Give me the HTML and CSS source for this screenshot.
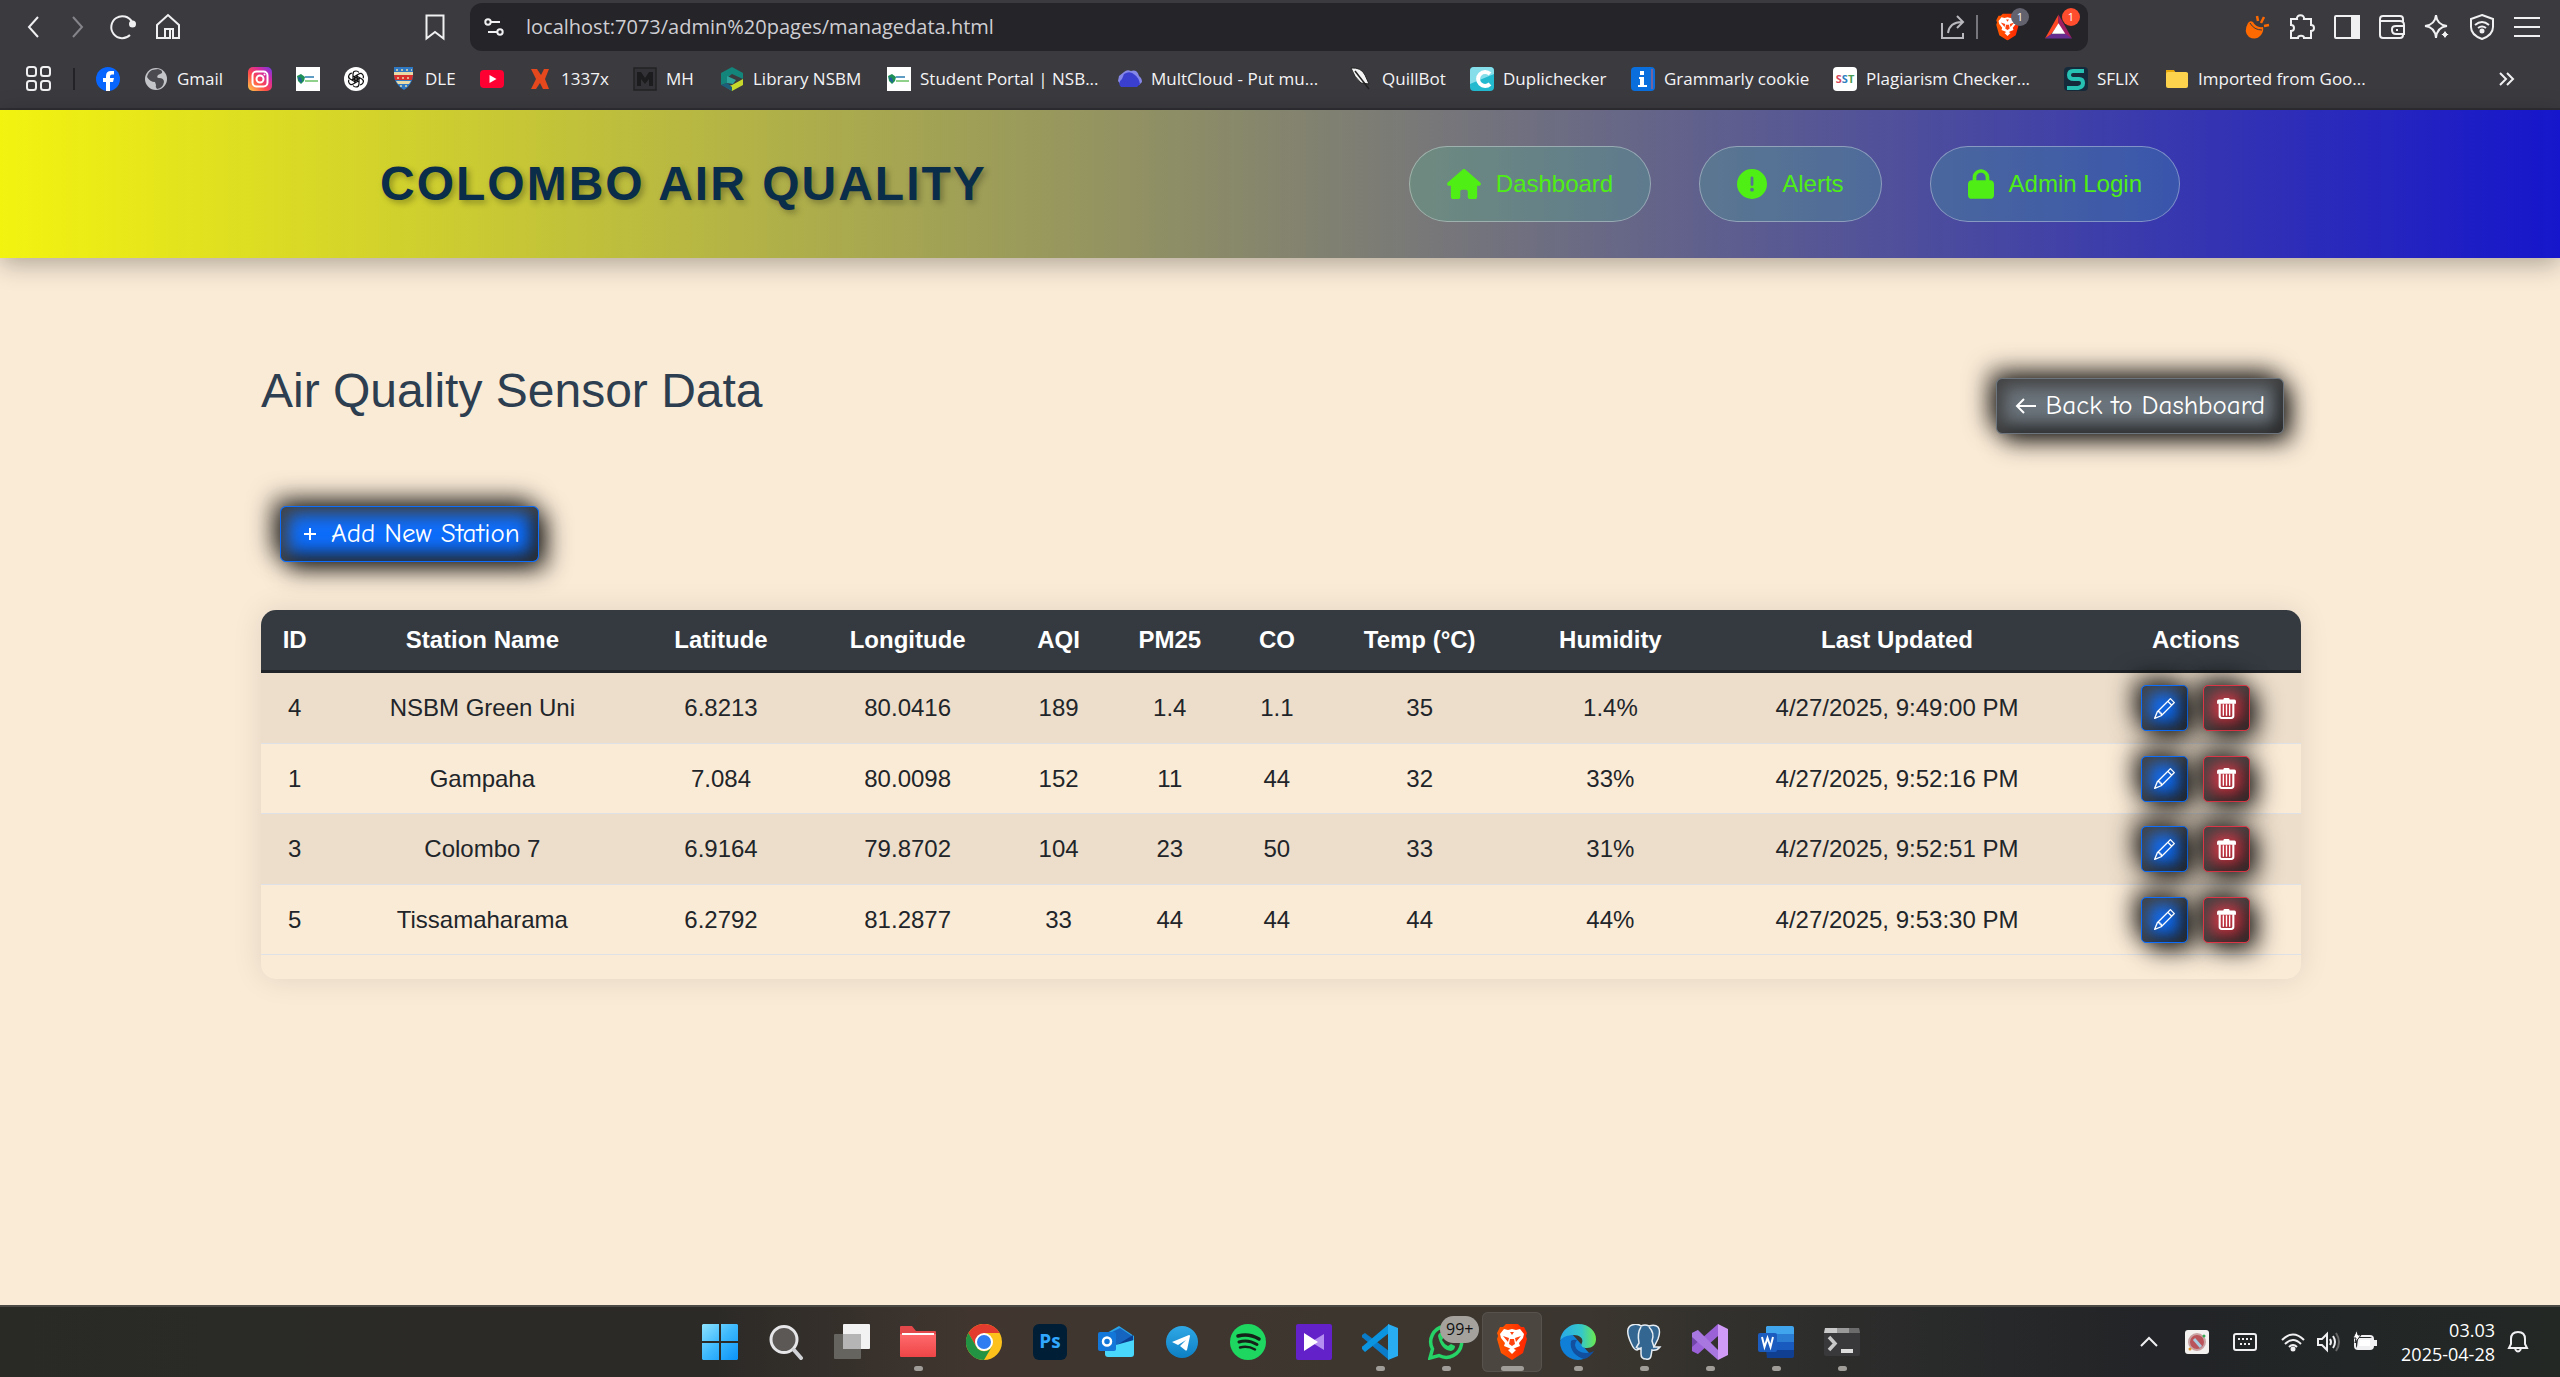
FILE: index.html
```html
<!DOCTYPE html>
<html lang="en">
<head>
<meta charset="utf-8">
<title>Colombo Air Quality - Manage Data</title>
<link rel="stylesheet" href="styles.css">
</head>
<body>
<svg class="defs" aria-hidden="true">
  <defs>
    <linearGradient id="gWin" x1="0" y1="0" x2="1" y2="1"><stop offset="0" stop-color="#8ee3ff"/><stop offset=".5" stop-color="#3cb8fd"/><stop offset="1" stop-color="#0a92f8"/></linearGradient>
    <linearGradient id="gInsta" x1="0" y1="1" x2="1" y2="0"><stop offset="0" stop-color="#ffd24a"/><stop offset=".4" stop-color="#ff4b4b"/><stop offset=".7" stop-color="#d52aa0"/><stop offset="1" stop-color="#6a3be8"/></linearGradient>
    <linearGradient id="gBrave" x1="0" x2="1"><stop offset="0" stop-color="#ff5a00"/><stop offset="1" stop-color="#ff2400"/></linearGradient>
    <linearGradient id="gEdge" x1="0" x2="1"><stop offset="0" stop-color="#29a9e8"/><stop offset=".6" stop-color="#35c8c8"/><stop offset="1" stop-color="#6bea4e"/></linearGradient>
    <linearGradient id="gTele" x1="0" y1="0" x2="0" y2="1"><stop offset="0" stop-color="#2fa8e6"/><stop offset="1" stop-color="#0d7fc4"/></linearGradient>
    <linearGradient id="gFold" x1="0" y1="0" x2="0" y2="1"><stop offset="0" stop-color="#ff6a6c"/><stop offset="1" stop-color="#ee4547"/></linearGradient>
    <symbol id="brave" viewBox="0 0 36 36"><path fill="url(#gBrave)" d="M12 0h12l3 3h3l3 6-1 3 1 3-4 14-11 7-11-7L3 15l1-3-1-3 3-6h3z"/><path fill="#fff" d="M18 5l4 1 4-1 4 5-1 4-4 5 1 3-5 2-3 2-3-2-5-2 1-3-4-5-1-4 4-5 4 1z"/><path fill="#ff4310" d="M9 12l6 2-1 4zM27 12l-6 2 1 4zM16 15h4l1 5-3 2-3-2zM16 8h4l-2 3z"/><path fill="#fff" d="M14 26l4-2 4 2-4 4z"/></symbol>
    <symbol id="nsbm" viewBox="0 0 24 24"><path fill="#fff" d="M0 0h24v24H0z"/><path fill="#1d8f57" d="M1 9l4-2 4 3-1 4-3 3-3-3z"/><path fill="#2457a8" d="M2 10l3 1 1 5-3-3z"/><path fill="#8fd08a" d="M9 13h13v2H9z"/><path fill="#5f9cc4" d="M9 9h9v2H9z"/></symbol>
    <symbol id="pencil" viewBox="0 0 16 16"><path fill="currentColor" d="M12.146.146a.5.5 0 0 1 .708 0l3 3a.5.5 0 0 1 0 .708l-10 10a.5.5 0 0 1-.168.11l-5 2a.5.5 0 0 1-.65-.65l2-5a.5.5 0 0 1 .11-.168zM11.207 2.5 13.5 4.793 14.793 3.5 12.5 1.207zm1.586 3L10.5 3.207 4 9.707V10h.5a.5.5 0 0 1 .5.5v.5h.5a.5.5 0 0 1 .5.5v.5h.293zm-9.761 5.175-.106.106-1.528 3.821 3.821-1.528.106-.106A.5.5 0 0 1 5 12.5V12h-.5a.5.5 0 0 1-.5-.5V11h-.5a.5.5 0 0 1-.468-.325z"/></symbol>
    <symbol id="trash" viewBox="0 0 20 20"><path fill="currentColor" d="M1 3q0-1.500 1.500-1.500H7Q7 0 8 0h4q1 0 1 1.500h4.500Q19 1.500 19 3v2.500H1z"/><path fill="none" stroke="currentColor" stroke-width="2" d="M3.500 5v12q0 2 2 2h9q2 0 2-2V5"/><path stroke="currentColor" stroke-width="1.300" d="M7 6v11M10 6v11M13 6v11"/></symbol>
  </defs>
</svg>

<div class="browser">
  <div class="toolbar">
    <nav class="controls" aria-label="Browser">
      <button class="tool" aria-label="Back"><svg viewBox="0 0 26 26"><path d="M18 3 9 13l9 10"/></svg></button>
      <button class="tool dim" aria-label="Forward"><svg viewBox="0 0 26 26"><path d="M8 3l9 10-9 10"/></svg></button>
      <button class="tool" aria-label="Reload"><svg viewBox="0 0 26 26"><path d="M20 21a11 11 0 1 1 2-13"/><circle cx="22.500" cy="10" r="2.500" fill="#f0f0f2"/></svg></button>
      <button class="tool" aria-label="Home"><svg viewBox="0 0 26 26"><path d="M2 11 13 1l11 10v13h-6v-9h-3v9H2zM10 24v-9h5"/></svg></button>
    </nav>
    <button class="tool mark" aria-label="Bookmark this page"><svg viewBox="0 0 26 26"><path d="M4.500 1.500h17v23L13 18l-8.500 6.500z"/></svg></button>
    <div class="omnibox">
      <button class="tool small" aria-label="Site settings"><svg viewBox="0 0 20 20"><circle cx="4" cy="5" r="2.700"/><path d="M7 5h9M4 15h9"/><circle cx="16" cy="15" r="2.700"/></svg></button>
      <input class="url" type="text" aria-label="Address" value="localhost:7073/admin%20pages/managedata.html">
      <button class="tool dimmer" aria-label="Share"><svg viewBox="0 0 26 26"><path d="M2 9v15h21v-5M8 19c1-7 5-11 14-11M17 2l6 6-6 6"/></svg></button>
      <span class="sep"></span>
      <button class="badged" aria-label="Brave Shields"><svg viewBox="0 0 36 36"><use href="#brave"/></svg><span class="badge gray">1</span></button>
      <button class="badged" aria-label="Brave Rewards"><svg viewBox="0 0 28 26"><path fill="#ff4724" d="M14 0v10L6 21l-6 4z"/><path fill="#9e1f63" d="M14 0l14 25-7-4-7-11z"/><path fill="#662d91" d="M0 25l7-5h14l7 5z"/><path fill="#fff" d="M14 9l7 11H7z"/></svg><span class="badge red">1</span></button>
    </div>
    <div class="extensions">
      <button class="tool" aria-label="Extension"><svg viewBox="0 0 26 26"><path fill="#ff6a00" stroke="none" d="M4 9q-5 9 1 14 7 4 12-2 3-4 2-8-7 1-10-5-3-2-5 1z"/><path stroke="#ff6a00" stroke-width="2.500" d="M13 2l1 5M20 3l-3 6M25 11l-5 1"/><path stroke="#3b3a3f" stroke-width="1" d="M6 9q4 7 12 7"/></svg></button>
      <button class="tool" aria-label="Extensions"><svg viewBox="0 0 26 26"><path d="M2 5h6c-1-5 8-5 7 0h7v6c4 0 4 6 0 6v7h-7c0-3-6-3-6 0H2v-7c4 0 4-6 0-6z"/></svg></button>
      <button class="tool" aria-label="Sidebar"><svg viewBox="0 0 26 26"><rect x="1" y="2" width="24" height="22" rx="1"/><path fill="#f0f0f2" d="M18 2h7v22h-7z"/></svg></button>
      <button class="tool" aria-label="Wallet"><svg viewBox="0 0 26 26"><path d="M24 8V5q0-3-3-3H4Q1 2 1 5v16q0 3 3 3h17q3 0 3-3v-2M1 7h20q4 0 4 4v9h-8q-4 0-4-4v-1q0-3 4-3h8M17 16h2"/></svg></button>
      <button class="tool" aria-label="Leo"><svg viewBox="0 0 26 26"><path d="M12 1q1 10 11 11-10 1-11 12-1-11-11-12Q11 11 12 1z"/><path fill="#f0f0f2" stroke="#3b3a3f" stroke-width="1" d="M21 15q1 5 5 5.500-4 .5-5 5.500-1-5-5-5.500 4-.5 5-5.500z"/></svg></button>
      <button class="tool" aria-label="VPN"><svg viewBox="0 0 26 26"><path d="M13 1l11 4v8q0 8-11 12Q2 21 2 13V5zM6 11q7-6 14 0M9 14q4-3 8 0"/><circle cx="13" cy="17" r="1.500" fill="#f0f0f2"/></svg></button>
      <button class="tool" aria-label="Menu"><svg viewBox="0 0 26 26"><path d="M0 4h26M0 13h26M0 22h26"/></svg></button>
    </div>
  </div>
  <nav class="bookmarks" aria-label="Bookmarks">
    <button class="tool" aria-label="Apps"><svg viewBox="0 0 26 26"><rect x="1" y="1" width="9" height="9" rx="2.500"/><rect x="15" y="1" width="9" height="9" rx="2.500"/><rect x="1" y="15" width="9" height="9" rx="2.500"/><rect x="15" y="15" width="9" height="9" rx="2.500"/></svg></button>
    <span class="rule"></span>
    <a href="#" aria-label="Facebook"><svg viewBox="0 0 24 24"><circle cx="12" cy="12" r="12" fill="#0866ff"/><path fill="#fff" d="M10 24v-9H7v-4h3V9q0-5 5-5h3v3.500h-2q-2 0-2 2V11h4l-1 4h-3v9z"/></svg></a>
    <a href="#"><svg viewBox="0 0 24 24"><circle cx="12" cy="12" r="11" fill="#c4c5c9"/><path fill="#4a4a50" d="M8 3l6-1q5 1 4 4l-4 2q-2 3 1 3 5 0 5 4-1 6-7 7-2-2-1-4l-1-3q-5 0-8-5 1-5 5-7z"/></svg><span>Gmail</span></a>
    <a href="#" aria-label="Instagram"><svg viewBox="0 0 24 24"><rect width="24" height="24" rx="5" fill="url(#gInsta)"/><g fill="none" stroke="#fff" stroke-width="2"><rect x="4.500" y="4.500" width="15" height="15" rx="4"/><circle cx="12" cy="12" r="3.500"/></g><circle cx="16.500" cy="7.500" r="1" fill="#fff"/></svg></a>
    <a href="#" aria-label="NSBM"><svg viewBox="0 0 24 24"><use href="#nsbm"/></svg></a>
    <a href="#" aria-label="ChatGPT"><svg viewBox="0 0 24 24"><circle cx="12" cy="12" r="12" fill="#fff"/><g fill="none" stroke="#111" stroke-width="1.200"><path id="petal" d="M9 13V7q0-3 3-3 2 0 3 1.500M9 9l5.500 3"/><use href="#petal" transform="rotate(60 12 12)"/><use href="#petal" transform="rotate(120 12 12)"/><use href="#petal" transform="rotate(180 12 12)"/><use href="#petal" transform="rotate(240 12 12)"/><use href="#petal" transform="rotate(300 12 12)"/></g></svg></a>
    <a href="#"><svg viewBox="0 0 24 24"><path fill="#2f79c4" d="M2 0h19v8q0 9-9 15Q2 17 2 8z"/><path fill="#e8d9a8" d="M2 5h19v3H2zM4 14h15l-2 3H6z"/><path fill="#d8302c" d="M2 8h19l-1 5H3z"/><path stroke="#e8d9a8" stroke-width="1.500" stroke-dasharray="2 3" d="M4 3h16M5 11h14M8 19h8"/></svg><span>DLE</span></a>
    <a href="#" aria-label="YouTube"><svg viewBox="0 0 24 24"><rect y="3" width="24" height="18" rx="4" fill="#ff0033"/><path fill="#fff" d="M9.500 8l7 4-7 4z"/></svg></a>
    <a href="#"><svg viewBox="0 0 24 24"><path fill="#e5481c" d="M3 2h6l4 6 3-6h5l-4 10 4 10h-6l-3-6-4 6H3l5-10z"/></svg><span>1337x</span></a>
    <a href="#"><svg viewBox="0 0 24 24"><rect x="1" y="1" width="22" height="22" fill="#333236" stroke="#232326" stroke-width="1.500"/><path fill="#1c1c1e" d="M4 19V5h4l4 6 4-6h4v14h-4v-7l-4 5-4-5v7z"/></svg><span>MH</span></a>
    <a href="#"><svg viewBox="0 0 24 24"><path fill="#14857b" d="M12 0l11 6v6L12 7l-5 4v5L1 18V6z"/><path fill="#2fa39b" d="M7 9l9 4-3 4-6-1z"/><path fill="#c8d92b" d="M23 12v6l-11 6-6-4 6-2z"/><path fill="#1b5f7a" d="M1 18l6-2 5 4v4z"/></svg><span>Library NSBM</span></a>
    <a href="#"><svg viewBox="0 0 24 24"><use href="#nsbm"/></svg><span>Student Portal | NSB...</span></a>
    <a href="#"><svg viewBox="0 0 24 24"><path fill="#8587e8" d="M6 5q3-3 7-1 6-2 8 5 3 2 3 6l-3 3H3l-3-4 1-5z"/><path fill="#3a3fd0" d="M6 7q6-4 11 1 4 3 5 9l-3 3H3q-4-4 1-8z"/></svg><span>MultCloud - Put mu...</span></a>
    <a href="#"><svg viewBox="0 0 24 24"><path fill="#f4f4f4" stroke="#222" d="M2 1q10-1 14 7l4 9-8-1Q5 10 2 1z"/><path stroke="#222" stroke-width="1.500" d="M6 4l14 18"/></svg><span>QuillBot</span></a>
    <a href="#"><svg viewBox="0 0 24 24"><rect width="24" height="24" rx="4" fill="#23b9cf"/><path fill="#86deea" d="M0 4q0-4 4-4h16q4 0 4 4v3L0 17z"/><path fill="none" stroke="#fff" stroke-width="4" d="M20 7a7 7 0 1 0 0 10"/></svg><span>Duplichecker</span></a>
    <a href="#"><svg viewBox="0 0 24 24"><rect width="24" height="24" rx="4" fill="#0a6fdc"/><path stroke="#e25a5a" d="M21 2v20"/><path fill="#fff" d="M9 4h4v4H9zM8 10h5v8h3v2H7v-2h2v-6H8z"/></svg><span>Grammarly cookie</span></a>
    <a href="#"><span class="sst"><b class="c1">S</b><b class="c2">S</b><b class="c3">T</b></span><span>Plagiarism Checker...</span></a>
    <a href="#"><svg viewBox="0 0 24 24"><rect width="24" height="24" rx="4" fill="#152b3c"/><path fill="none" stroke="#27c1b4" stroke-width="4" d="M20 4H9Q5 4 5 8t5 4h5q4 0 4 4t-5 5H3"/></svg><span>SFLIX</span></a>
    <a href="#"><svg viewBox="0 0 24 24"><path fill="#e8a90c" d="M1 3h8l2 3h12v4H1z"/><rect x="1" y="5" width="22" height="16" rx="2" fill="#fdd24d"/></svg><span>Imported from Goo...</span></a>
    <button class="tool more" aria-label="More bookmarks"><svg viewBox="0 0 26 26"><path d="M4 7l6 6-6 6M11 7l6 6-6 6"/></svg></button>
  </nav>
</div>

<header class="site-header">
  <div class="header-inner">
    <h1>COLOMBO AIR QUALITY</h1>
    <nav class="site-nav" aria-label="Main">
      <a href="#"><svg class="house" viewBox="0 0 576 512"><path d="M575.800 255.500c0 18-15 32.100-32 32.100h-32l.7 160.200c0 2.700-.2 5.400-.5 8.100V472c0 22.100-17.900 40-40 40H392c-22.100 0-40-17.900-40-40v-88c0-17.700-14.300-32-32-32h-64c-17.700 0-32 14.300-32 32v88c0 22.100-17.900 40-40 40h-80c-22.100 0-40-17.900-40-40V287.600H32c-18 0-32-14-32-32.100 0-9 3-17 10-24L266.400 8c7-7 15-8 22-8s15 2 21 7l255.400 224.500c8 7 12 15 11 24z"/></svg>Dashboard</a>
      <a href="#"><svg class="circle" viewBox="0 0 512 512"><path d="M256 512A256 256 0 1 0 256 0a256 256 0 1 0 0 512zm0-384c13.300 0 24 10.700 24 24v112c0 13.300-10.700 24-24 24s-24-10.700-24-24V152c0-13.300 10.700-24 24-24zm-32 224a32 32 0 1 1 64 0 32 32 0 1 1-64 0z"/></svg>Alerts</a>
      <a href="#"><svg class="lock" viewBox="0 0 448 512"><path d="M144 144v48h160v-48c0-44.200-35.800-80-80-80s-80 35.800-80 80zm-64 48v-48C80 64.500 144.500 0 224 0s144 64.500 144 144v48h16c35.300 0 64 28.700 64 64v192c0 35.300-28.700 64-64 64H64c-35.300 0-64-28.700-64-64V256c0-35.300 28.700-64 64-64h16z"/></svg>Admin Login</a>
    </nav>
  </div>
</header>

<main class="content">
  <div class="title-row">
    <h2>Air Quality Sensor Data</h2>
    <a class="btn secondary" href="#"><svg viewBox="0 0 22 22"><path d="M21 11H2M9 4l-7 7 7 7"/></svg>Back to Dashboard</a>
  </div>
  <button class="btn primary"><svg viewBox="0 0 22 22"><path d="M11 5v12M5 11h12"/></svg>Add New Station</button>
  <div class="card">
    <table>
      <colgroup><col class="c-id"><col class="c-name"><col class="c-lat"><col class="c-lon"><col class="c-aqi"><col class="c-pm"><col class="c-co"><col class="c-temp"><col class="c-hum"><col class="c-date"><col class="c-act"></colgroup>
      <thead><tr><th>ID</th><th>Station Name</th><th>Latitude</th><th>Longitude</th><th>AQI</th><th>PM25</th><th>CO</th><th>Temp (°C)</th><th>Humidity</th><th>Last Updated</th><th>Actions</th></tr></thead>
      <tbody>
        <tr><td>4</td><td>NSBM Green Uni</td><td>6.8213</td><td>80.0416</td><td>189</td><td>1.4</td><td>1.1</td><td>35</td><td>1.4%</td><td>4/27/2025, 9:49:00 PM</td><td><div class="actions"><button class="icon-btn edit" aria-label="Edit"><svg><use href="#pencil"/></svg></button><button class="icon-btn delete" aria-label="Delete"><svg><use href="#trash"/></svg></button></div></td></tr>
        <tr><td>1</td><td>Gampaha</td><td>7.084</td><td>80.0098</td><td>152</td><td>11</td><td>44</td><td>32</td><td>33%</td><td>4/27/2025, 9:52:16 PM</td><td><div class="actions"><button class="icon-btn edit" aria-label="Edit"><svg><use href="#pencil"/></svg></button><button class="icon-btn delete" aria-label="Delete"><svg><use href="#trash"/></svg></button></div></td></tr>
        <tr><td>3</td><td>Colombo 7</td><td>6.9164</td><td>79.8702</td><td>104</td><td>23</td><td>50</td><td>33</td><td>31%</td><td>4/27/2025, 9:52:51 PM</td><td><div class="actions"><button class="icon-btn edit" aria-label="Edit"><svg><use href="#pencil"/></svg></button><button class="icon-btn delete" aria-label="Delete"><svg><use href="#trash"/></svg></button></div></td></tr>
        <tr><td>5</td><td>Tissamaharama</td><td>6.2792</td><td>81.2877</td><td>33</td><td>44</td><td>44</td><td>44</td><td>44%</td><td>4/27/2025, 9:53:30 PM</td><td><div class="actions"><button class="icon-btn edit" aria-label="Edit"><svg><use href="#pencil"/></svg></button><button class="icon-btn delete" aria-label="Delete"><svg><use href="#trash"/></svg></button></div></td></tr>
      </tbody>
    </table>
  </div>
</main>

<footer class="taskbar">
  <div class="apps">
    <button aria-label="Start"><svg viewBox="0 0 36 36"><path fill="url(#gWin)" d="M1 0h16v17H0V1zM19 0h16l1 1v16H19zM0 19h17v17H1l-1-1zM19 19h17v16l-1 1H19z"/></svg></button>
    <button aria-label="Search"><svg viewBox="0 0 36 36"><circle cx="16" cy="15.500" r="13" fill="#5b5855" stroke="#e6e6e8" stroke-width="3"/><path stroke="#d0d2d6" stroke-width="4" stroke-linecap="round" d="M26 26l7 8"/></svg></button>
    <button aria-label="Task view"><svg viewBox="0 0 36 36"><rect x="9" y="0" width="27" height="25" rx="1" fill="#f2f2f2"/><rect x="0" y="10" width="27" height="25" rx="1" fill="#66645f"/><path fill="#b5b5b5" d="M9 10h18v15H9z"/></svg></button>
    <button class="run" aria-label="File Explorer"><svg viewBox="0 0 36 36"><path fill="#e2474a" d="M0 3q0-1 1-1h11l4 5h19q1 0 1 1v10H0z"/><path fill="url(#gFold)" d="M0 10h36v22q0 1-1 1H1q-1 0-1-1z"/><path fill="#fff" d="M2 9h32v2H2z"/></svg></button>
    <button aria-label="Chrome"><svg viewBox="0 0 36 36"><circle cx="18" cy="18" r="18" fill="#fcc21b"/><path fill="#e33b2e" d="M18 9h15.600A18 18 0 0 0 2.400 9l8 14z"/><path fill="#229342" d="M2.400 9A18 18 0 0 0 18 36l8-13.500A9 9 0 0 1 10.200 22.500z"/><circle cx="18" cy="18" r="9" fill="#fff"/><circle cx="18" cy="18" r="7" fill="#2f7df0"/></svg></button>
    <button aria-label="Photoshop"><span class="ps">Ps</span></button>
    <button aria-label="Outlook"><svg viewBox="0 0 36 36"><path fill="#2aa4e8" d="M7 10L21 2l15 10v12H7z"/><path fill="#1565c0" d="M14 8l8-4 12 8-16 12z"/><path fill="#0b3f8f" d="M35 11v6L19 27v-6z"/><path fill="#49d8fb" d="M7 24l29-8v14q0 3-3 3H10q-3 0-3-3z"/><rect y="8" width="18" height="19" rx="2" fill="#1277d8"/><circle cx="9" cy="17.500" r="4" fill="none" stroke="#fff" stroke-width="2.500"/></svg></button>
    <button aria-label="Telegram"><svg viewBox="0 0 36 36"><circle cx="18" cy="18" r="16" fill="url(#gTele)"/><path fill="#fff" d="M8 18l17-7q1 0 1 1l-3 14q-1 1-2 0l-5-4 6-6-8 5z"/></svg></button>
    <button aria-label="Spotify"><svg viewBox="0 0 36 36"><circle cx="18" cy="18" r="18" fill="#1ed760"/><g fill="none" stroke="#14221a" stroke-linecap="round"><path stroke-width="3.500" d="M8 12q11-3 21 3"/><path stroke-width="3" d="M9 18q9-3 18 2.500"/><path stroke-width="2.500" d="M10 23.500q8-2 15 2"/></g></svg></button>
    <button aria-label="KineMaster"><svg viewBox="0 0 36 36"><rect width="36" height="36" rx="2" fill="#6321c9"/><path fill="#b48ef0" d="M28 10v16L15 18z"/><path fill="#fff" d="M8 9l14 9-14 9z"/></svg></button>
    <button class="run" aria-label="Visual Studio Code"><svg viewBox="0 0 36 36"><path fill="#0a7cc9" d="M0 11l3-2 24 18v9L1 14q-2-1-1-3z"/><path fill="#0b94e0" d="M0 25l3 3 24-19V0L1 22q-2 1-1 3z"/><path fill="#29adf2" d="M26 0l10 4v28l-10 4z"/></svg></button>
    <button class="run" aria-label="WhatsApp"><svg viewBox="0 0 36 36"><path fill="none" stroke="#25d366" stroke-width="3.500" d="M2 34l2.500-9A15.500 15.500 0 1 1 11 31.500z"/><path fill="#25d366" d="M10 12q1-4 4-3l2 4-2 3q2 4 6 6l3-2 4 2q0 4-4 5-10-1-13-15z"/></svg><span class="count">99+</span></button>
    <button class="run active" aria-label="Brave"><svg viewBox="0 0 36 36"><use href="#brave"/></svg></button>
    <button class="run" aria-label="Edge"><svg viewBox="0 0 36 36"><path fill="#0f7fd8" d="M0 18a18 18 0 0 0 22 17.500L30 30 12 10 3 10z"/><path fill="url(#gEdge)" d="M0 17C1 6 10 0 18 0c12 0 18 8 18 15 0 6-4 9-9 9-4 0-7-2-5-5 2-5-3-8-8-8C8 11 2 13 0 17z"/><path fill="#124f9e" d="M11 17c-2 9 5 16 13 18 5-1 8-5 10-8-7 4-18 2-19-6q0-3 2-5-4-1-6 1z"/></svg></button>
    <button class="run" aria-label="PostgreSQL"><svg viewBox="0 0 36 36"><path fill="#336791" stroke="#e6edf3" stroke-width="1.500" d="M6 1q5-2 9 1 4-2 8 0 6-2 9 1 3 4 0 12l-4 8h6q-3 4-8 3l-1 6q-1 4-5 3-5 0-5-5v-6l-4 2q-3 0-6-7Q-2 4 6 1z"/><path fill="none" stroke="#e6edf3" stroke-width="1.500" d="M15 3q-4 6-2 16l-3 5M23 3q6 6 3 14l2 6M11 24l4 1"/></svg></button>
    <button class="run" aria-label="Visual Studio"><svg viewBox="0 0 36 36"><path fill="#7246a8" d="M0 9l6-3v24l-6-3z"/><path fill="#9b62d8" d="M0 27V23L26 0v12L6 30z"/><path fill="#a877e0" d="M0 9l6-3 20 20v10L0 13z"/><path fill="#cf9bf7" d="M26 0l10 5v26l-10 5z"/></svg></button>
    <button class="run" aria-label="Word"><svg viewBox="0 0 36 36"><path fill="#41a5ee" d="M9 2h25q2 0 2 2v7H8V3z"/><path fill="#2b7cd3" d="M8 10h28v8H8z"/><path fill="#185abd" d="M8 18h28v8H8z"/><path fill="#103f91" d="M8 26h28v6q0 2-2 2H9z"/><rect y="9" width="19" height="19" rx="2" fill="#1b5cbe"/><path fill="none" stroke="#fff" stroke-width="2" d="M4 13l2.500 10L9.500 14l3 9L15 13"/></svg></button>
    <button class="run" aria-label="Terminal"><svg viewBox="0 0 36 36"><rect y="4" width="36" height="28" rx="2" fill="#39393b"/><path fill="#c9c9c9" d="M1 4h12v5H0z"/><path fill="#999" d="M13 4h12v5H13z"/><path fill="#6b6b6b" d="M25 4h10l1 5H25z"/><path fill="none" stroke="#c9c9c9" stroke-width="3.500" d="M5 13l6 6.500L5 26"/><path fill="#ddd" d="M17 25h12v4H17z"/></svg></button>
  </div>
  <div class="tray">
    <button class="tool" aria-label="Hidden icons"><svg viewBox="0 0 24 24"><path d="M4 16l8-8 8 8"/></svg></button>
    <button class="tool" aria-label="Tools"><svg viewBox="0 0 24 24"><rect width="24" height="24" rx="3" fill="#f4f1f1" stroke="none"/><circle cx="12" cy="12" r="8" fill="#b9545b" stroke="#c9a3a3" stroke-width="2"/><path stroke="#a9cbe0" stroke-width="3" d="M9 9l7 8"/><circle cx="19" cy="6" r="1.500" fill="#38a852" stroke="none"/><circle cx="5" cy="19" r="1.500" fill="#e0912c" stroke="none"/></svg></button>
    <button class="tool" aria-label="Touch keyboard"><svg viewBox="0 0 24 24"><rect x="1" y="4" width="22" height="16" rx="2"/><path stroke-dasharray="2 2" d="M5 9h15M7 14h11"/></svg></button>
    <button class="status" aria-label="Network, volume, battery">
      <svg viewBox="0 0 24 24"><path d="M1 10q11-11 22 0M4 14q8-8 16 0M8 17q4-4 8 0"/><circle cx="12" cy="19" r="1.500" fill="#fff"/></svg>
      <svg viewBox="0 0 24 24"><path d="M1 9h4l5-5v16l-5-5H1zM13 9q2 3 0 6M16 6q4 6 0 12"/><path stroke="#666" d="M19 3q6 9 0 18"/></svg>
      <svg viewBox="0 0 24 24"><rect x="2" y="6" width="18" height="13" rx="3"/><path fill="#fff" d="M6 9h12v8H5zM21 11h2v4h-2z"/><path fill="#fff" stroke="#222527" stroke-width="1" d="M4 0L0 8h3l-1 5 6-8H5z"/></svg>
    </button>
    <button class="clock"><span>03.03</span><span>2025-04-28</span></button>
    <button class="tool" aria-label="Notifications"><svg viewBox="0 0 24 24"><path d="M12 2q-7 0-7 7v5l-2 4h18l-2-4V9q0-7-7-7zM9 19q3 5 6 0"/></svg></button>
  </div>
</footer>
</body>
</html>
```
FILE: styles.css
```css
* { box-sizing: border-box; }

body {
  margin: 0;
  min-height: 100vh;
  display: flex;
  flex-direction: column;
  background: #faebd7;
  color: #212529;
  font-family: "Liberation Sans", Arial, sans-serif;
  font-size: 24px;
  line-height: 36px;
}

button, input { font: inherit; color: inherit; }
button { padding: 0; border: 0; background: none; }
a { color: inherit; text-decoration: none; }
.defs { position: absolute; width: 0; height: 0; }

/* browser window */
.browser {
  height: 110px;
  background: #3b3a3f;
  border-bottom: 2px solid #2f2e33;
  color: #f4f4f6;
  font-family: "Open Sans", "Noto Sans", sans-serif;
  font-size: 17px;
  line-height: 24px;
}
.tool { display: block; width: 26px; height: 26px; flex: none; }
.tool svg { display: block; width: 100%; height: 100%; }
.tool svg, .status svg {
  fill: none;
  stroke: #f0f0f2;
  stroke-width: 2;
  overflow: visible;
}
.tool.dim svg { stroke: #85848a; }
.tool.dimmer svg { stroke: #b9b8bd; }
.tool.small { width: 20px; height: 20px; }
.toolbar {
  display: flex;
  align-items: center;
  height: 54px;
  padding: 0 20px;
}
.controls { display: flex; gap: 19px; }
.mark { margin-left: 241px; }
.omnibox {
  flex: 1;
  display: flex;
  align-items: center;
  height: 48px;
  margin: 0 156px 0 22px;
  padding: 0 12px 0 14px;
  border-radius: 12px;
  background: #252429;
}
.url {
  flex: 1;
  margin-left: 22px;
  padding: 0;
  border: 0;
  background: none;
  color: #cfced3;
  font-size: 20px;
}
.sep { width: 2px; height: 24px; margin: 0 16px 0 10px; background: #77767c; }
.badged { position: relative; width: 27px; height: 28px; margin-right: 12px; }
.badged + .badged { margin: 0 4px 0 12px; }
.badged svg { display: block; width: 100%; height: 100%; }
.badge {
  position: absolute;
  top: -5px;
  right: -8px;
  width: 18px;
  height: 18px;
  border-radius: 9px;
  font-size: 11px;
  line-height: 18px;
  color: #fff;
}
.gray { background: #62626f; }
.red { background: #ff4d2e; }
.extensions { display: flex; gap: 19px; }

.bookmarks {
  display: grid;
  grid-template-columns: 47px 23px 48px 104px 48px 48px 48px 88px 48px 105px 87px 167px 231px 231px 121px 161px 202px 231px 101px 1fr auto;
  align-items: center;
  height: 50px;
  padding: 0 38px 0 26px;
}
.bookmarks a { display: flex; align-items: center; gap: 9px; white-space: nowrap; }
.bookmarks a svg { flex: none; width: 24px; height: 24px; }
.rule { width: 2px; height: 22px; background: #232227; }
.sst {
  flex: none;
  width: 24px;
  height: 24px;
  border-radius: 4px;
  background: #fff;
  font-size: 11px;
  text-align: center;
}
.c1 { color: #d8485c; }
.c2 { color: #2e7fc0; }
.c3 { color: #4a9d54; }

/* site header */
.site-header {
  padding: 36px 40px;
  background: linear-gradient(90deg, #f3f310, #1616cc);
  box-shadow: 0 6px 24px rgba(0, 0, 0, .3);
}
.header-inner {
  display: flex;
  align-items: center;
  justify-content: space-between;
  max-width: 1800px;
  margin: 0 auto;
}
h1 {
  margin: 0;
  font-size: 48px;
  line-height: 72px;
  letter-spacing: 2px;
  color: #0a2d4a;
  text-shadow: 3px 3px 6px rgba(0, 0, 0, .3);
}
.site-nav { display: flex; gap: 48px; }
.site-nav a {
  display: flex;
  align-items: center;
  gap: 15px;
  height: 76px;
  padding: 0 37px;
  border: 1px solid rgba(255, 255, 255, .35);
  border-radius: 38px;
  background: rgba(72, 212, 160, .2);
  color: #4fee14;
}
.site-nav svg { height: 30px; fill: currentColor; }
.house { width: 34px; }
.circle { width: 30px; }
.lock { width: 26px; }

/* sensor data */
.content {
  flex: 1;
  width: 100%;
  max-width: 2120px;
  margin: 0 auto;
  padding: 104px 39px 40px 41px;
}
.title-row {
  display: flex;
  align-items: flex-start;
  justify-content: space-between;
}
h2 {
  margin: 0;
  font-size: 48px;
  font-weight: 400;
  line-height: 58px;
  color: #2c3e50;
}
.btn {
  display: inline-flex;
  align-items: center;
  height: 56px;
  padding: 0 18px;
  border: 1px solid;
  border-radius: 6px;
  color: #fff;
  font-family: "Comic Sans MS", "Comic Neue", "Noto Sans", sans-serif;
  font-size: 27px;
}
.btn svg { width: 22px; height: 22px; fill: none; stroke: #fff; stroke-width: 2; }
.btn, .icon-btn {
  box-shadow:
    7px 7px 24px rgba(0, 0, 0, .85),
    -7px -7px 24px rgba(0, 0, 0, .75),
    inset 7px 7px 18px #444,
    inset -7px -7px 18px #222;
}
.secondary { margin: 16px 17px 0 0; gap: 8px; background: #6c757d; border-color: #6c757d; }
.primary { margin: 72px 0 48px 19px; gap: 10px; background: #0d6efd; border-color: #0d6efd; }

.card {
  padding-bottom: 24px;
  border-radius: 15px;
  overflow: hidden;
  box-shadow: 0 0 30px rgba(0, 0, 0, .1);
}
table {
  width: 100%;
  table-layout: fixed;
  border-collapse: separate;
  border-spacing: 0;
  text-align: center;
}
.c-id { width: 3.3%; }
.c-name { width: 15.1%; }
.c-lat { width: 8.3%; }
.c-lon { width: 10%; }
.c-aqi { width: 4.8%; }
.c-pm { width: 6.1%; }
.c-co { width: 4.4%; }
.c-temp { width: 9.6%; }
.c-hum { width: 9.1%; }
.c-date { width: 19%; }
.c-act { width: 10.3%; }
th {
  height: 63px;
  padding: 0;
  background: #343a40;
  border-bottom: 3px solid #212529;
  color: #fff;
}
td {
  height: 70px;
  padding: 0;
  border-bottom: 1px solid #dee2e6;
}
tbody tr:nth-child(odd) td { height: 71px; background: #eddecb; }
.actions { display: flex; justify-content: center; gap: 15px; }
.icon-btn {
  display: flex;
  align-items: center;
  justify-content: center;
  width: 47px;
  height: 46px;
  border: 1px solid;
  border-radius: 5px;
  color: #fff;
}
.icon-btn svg { width: 21px; height: 21px; }
.edit { background: #0d6efd; border-color: #0d6efd; }
.delete { background: #dc3545; border-color: #dc3545; }

/* desktop taskbar */
.taskbar {
  display: grid;
  grid-template-columns: 1fr auto 1fr;
  align-items: center;
  height: 72px;
  padding-left: 2px;
  border-top: 2px solid #4b4a44;
  background: linear-gradient(90deg, #292a26, #2c2a27 28%, #40362f 38%, #3b362f 62%, #2e2e2c 70%, #222427 84%, #232825);
  color: #fff;
  font-family: "Open Sans", "Noto Sans", sans-serif;
  font-size: 18px;
  line-height: 24px;
}
.apps { grid-column: 2; display: flex; gap: 6px; }
.apps button {
  position: relative;
  display: flex;
  align-items: center;
  justify-content: center;
  width: 60px;
  height: 60px;
  border-radius: 6px;
}
.apps svg { width: 36px; height: 36px; }
.run::after {
  content: "";
  position: absolute;
  bottom: 1px;
  width: 9px;
  height: 5px;
  border-radius: 3px;
  background: #a09d99;
}
.apps .active { background: #4b4640; box-shadow: inset 0 0 0 1px #57524c; }
.active::after { width: 23px; }
.ps {
  width: 34px;
  height: 36px;
  border-radius: 6px;
  background: #001e36;
  color: #31a8ff;
  font-size: 19px;
  font-weight: 700;
  line-height: 34px;
}
.count {
  position: absolute;
  top: 4px;
  left: 24px;
  padding: 0 6px;
  border-radius: 14px;
  background: #a5a29e;
  color: #111;
  font-size: 16px;
  line-height: 27px;
}
.tray {
  display: flex;
  align-items: center;
  justify-content: flex-end;
  gap: 24px;
  padding-right: 30px;
}
.tray .tool, .status svg { width: 24px; height: 24px; }
.status { display: flex; gap: 12px; }
.clock { display: flex; flex-direction: column; text-align: right; margin-right: -13px; }
```
